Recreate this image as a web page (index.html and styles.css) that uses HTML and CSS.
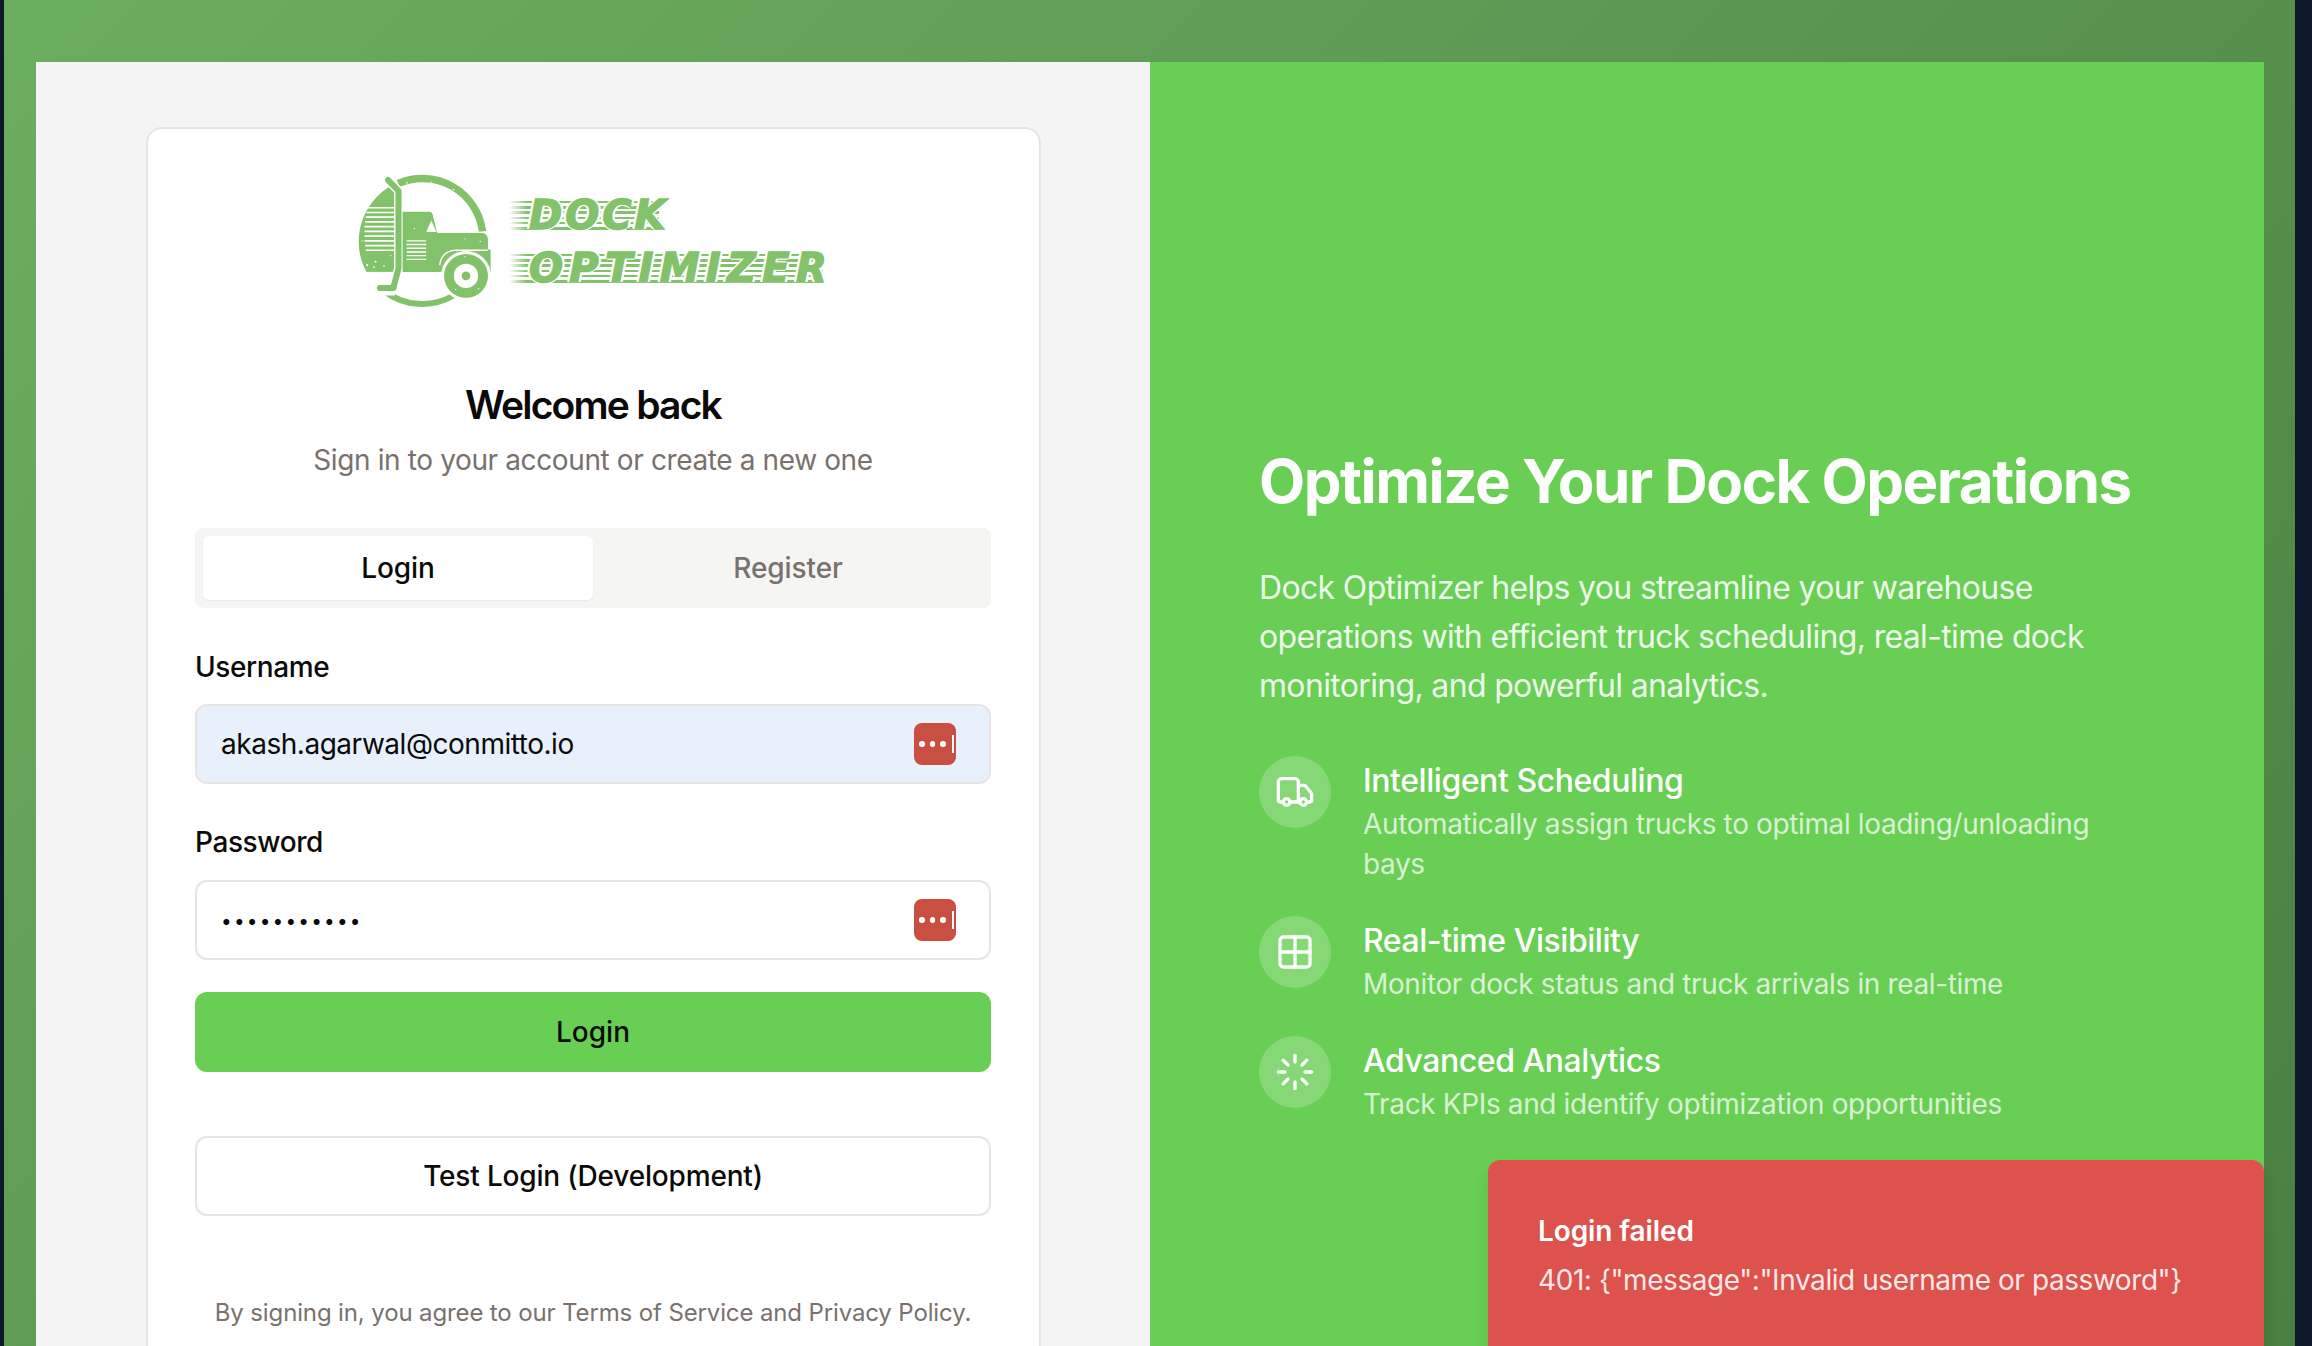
FILE: index.html
```html
<!DOCTYPE html>
<html lang="en">
<head>
<meta charset="utf-8">
<title>Dock Optimizer</title>
<link rel="stylesheet" href="styles.css">
</head>
<body>
<div class="shell">
  <main class="panel">
    <section class="left">
      <div class="card">
        <div class="logo">
          <svg class="logo-mark" viewBox="80 70 400 400" aria-hidden="true">
            <defs>
              <clipPath id="disc"><circle cx="275" cy="270" r="190"/></clipPath>
            </defs>
            <path class="lg-stroke w22" d="M202 98A180 180 0 0 1 452 240"/>
            <path class="lg-stroke w18" d="M160 416A184 184 0 0 0 366 430"/>
            <g clip-path="url(#disc)">
              <rect class="lg" x="80" y="110" width="112" height="250"/>
              <path class="gap-line" d="M110 170H192M108 184H192M106 198H192M104 212H192M102 226H192M102 240H192M102 254H192M102 268H192M104 282H192M106 296H192"/>
            </g>
            <path class="cut" d="M100 361L192 361L192 430L100 430Z"/>
            <path class="halo" d="M172 88L203 120V350L190 398L188 408H148"/>
            <path class="lg-stroke w18" d="M172 88L203 120V350L190 398L188 408H148"/>
            <path class="lg" d="M218 182H294Q302 182 304 190L318 245H452Q466 247 468 262L468 292L476 296V362H340L338 360H215V182Z"/>
            <path class="hole" d="M285 242L300 208L316 242Z"/>
            <path class="gap-line thin" d="M227 268H285M227 279H285M227 290H285M227 301H285M227 312H285M227 323H285"/>
            <path class="cab-arc" d="M325 340Q330 300 370 296H468"/>
            <circle class="wheel-gap" cx="403" cy="372" r="74"/>
            <circle class="lg" cx="403" cy="372" r="65"/>
            <circle class="hole" cx="403" cy="372" r="36"/>
            <circle class="lg" cx="403" cy="372" r="13"/>
            <g class="specks">
              <circle cx="228" cy="96" r="2.5"/><circle cx="300" cy="94" r="2"/><circle cx="366" cy="116" r="2.5"/>
              <circle cx="110" cy="340" r="3"/><circle cx="135" cy="330" r="3"/><circle cx="160" cy="342" r="2.5"/>
              <circle cx="180" cy="312" r="2"/><circle cx="130" cy="346" r="2.5"/><circle cx="250" cy="232" r="2"/>
              <circle cx="400" cy="262" r="2"/><circle cx="445" cy="270" r="2"/><circle cx="400" cy="315" r="2"/>
              <circle cx="372" cy="412" r="2"/><circle cx="440" cy="410" r="2"/><circle cx="95" cy="268" r="2"/>
            </g>
          </svg>
          <div class="wordmark">
            <span class="word word-short">DOCK</span>
            <span class="word word-long">OPTIMIZER</span>
          </div>
        </div>
        <h1 class="welcome">Welcome back</h1>
        <p class="sub">Sign in to your account or create a new one</p>
        <div class="tabs">
          <button class="tab active" type="button">Login</button>
          <button class="tab" type="button">Register</button>
        </div>
        <form class="form">
          <label class="field">
            <span class="label">Username</span>
            <span class="input-wrap">
              <input class="input filled" type="text" value="akash.agarwal@conmitto.io">
              <span class="pm"><i></i><i></i><i></i><b></b></span>
            </span>
          </label>
          <label class="field">
            <span class="label">Password</span>
            <span class="input-wrap">
              <input class="input secret" type="password" value="abcdefghijk">
              <span class="pm"><i></i><i></i><i></i><b></b></span>
            </span>
          </label>
          <button class="btn primary" type="button">Login</button>
          <button class="btn outline" type="button">Test Login (Development)</button>
        </form>
        <p class="terms">By signing in, you agree to our Terms of Service and Privacy Policy.</p>
      </div>
    </section>
    <section class="right">
      <h2 class="headline">Optimize Your Dock Operations</h2>
      <p class="lead">Dock Optimizer helps you streamline your warehouse operations with efficient truck scheduling, real-time dock monitoring, and powerful analytics.</p>
      <ul class="features">
        <li class="feature">
          <span class="f-icon">
            <svg viewBox="0 0 24 24"><path d="M14 18V6a2 2 0 0 0-2-2H4a2 2 0 0 0-2 2v11a1 1 0 0 0 1 1h2"/><path d="M15 18H9"/><path d="M19 18h2a1 1 0 0 0 1-1v-3.65a1 1 0 0 0-.22-.624l-3.48-4.35A1 1 0 0 0 17.52 8H14"/><circle cx="17" cy="18" r="2"/><circle cx="7" cy="18" r="2"/></svg>
          </span>
          <div><h3 class="f-title">Intelligent Scheduling</h3><p class="f-desc">Automatically assign trucks to optimal loading/unloading bays</p></div>
        </li>
        <li class="feature">
          <span class="f-icon">
            <svg viewBox="0 0 24 24"><path d="M12 3v18"/><path d="M3 12h18"/><rect x="3" y="3" width="18" height="18" rx="2"/></svg>
          </span>
          <div><h3 class="f-title">Real-time Visibility</h3><p class="f-desc">Monitor dock status and truck arrivals in real-time</p></div>
        </li>
        <li class="feature">
          <span class="f-icon">
            <svg viewBox="0 0 24 24"><path d="M12 2v4"/><path d="m16.2 7.8 2.9-2.9"/><path d="M18 12h4"/><path d="m16.2 16.2 2.9 2.9"/><path d="M12 18v4"/><path d="m4.9 19.1 2.9-2.9"/><path d="M2 12h4"/><path d="m4.9 4.9 2.9 2.9"/></svg>
          </span>
          <div><h3 class="f-title">Advanced Analytics</h3><p class="f-desc">Track KPIs and identify optimization opportunities</p></div>
        </li>
      </ul>
    </section>
    <aside class="toast">
      <div class="toast-title">Login failed</div>
      <div class="toast-body">401: {"message":"Invalid username or password"}</div>
    </aside>
  </main>
</div>
</body>
</html>
```
FILE: styles.css
```css
* { box-sizing: border-box; }
html, body { margin: 0; height: 100%; }
body {
  background: #0f172a;
  font-family: Inter, "Noto Sans", sans-serif;
  color: #0c0a09;
  overflow: hidden;
}
.shell {
  margin: 0 17px 0 4px;
  height: 1346px;
  padding: 62px 31px 0 32px;
  background: linear-gradient(135deg, #6cae60 0%, #4a7f41 100%);
  overflow: hidden;
}
.panel {
  position: relative;
  display: grid;
  grid-template-columns: 1114px 1114px;
  height: 1284px;
}
.left { background: #f4f4f4; padding: 65px 109px 0 110px; overflow: hidden; }
.card {
  height: 1300px;
  background: #fff;
  border: 2px solid #e7e5e4;
  border-radius: 16px;
  padding: 45px 48px 0 47px;
}
.logo { display: flex; align-items: center; gap: 17px; height: 135px; padding-left: 162px; }
.logo-mark { width: 135px; height: 135px; flex: none; }
.lg { fill: #82c26a; }
.lg-stroke { fill: none; stroke: #82c26a; stroke-linecap: round; stroke-linejoin: round; }
.w22 { stroke-width: 22; stroke-linecap: butt; }
.w18 { stroke-width: 18; }
.halo { fill: none; stroke: #fff; stroke-width: 26; }
.gap-line { fill: none; stroke: #fff; stroke-width: 5; }
.gap-line.thin { stroke-width: 4; }
.cut, .hole { fill: #fff; }
.cab-arc { fill: none; stroke: #fff; stroke-width: 4; }
.wheel-gap { fill: #fff; }
.specks { fill: #fff; }
.wordmark { display: flex; flex-direction: column; gap: 24px; flex: none; }
.word {
  position: relative;
  z-index: 0;
  display: block;
  width: max-content;
  font-family: "DejaVu Sans", sans-serif;
  font-weight: 700;
  font-style: italic;
  font-size: 40px;
  line-height: 29px;
  color: #82c26a;
  padding-left: 20px;
  -webkit-text-stroke: 1.4px #82c26a;
  text-shadow: 3px 0 0 #fff, -3px 0 0 #fff, 0 2px 0 #fff, 0 -2px 0 #fff;
}
.word-short { letter-spacing: 3px; }
.word-long { letter-spacing: 6.3px; }
.word::before {
  content: "";
  position: absolute;
  left: 0; right: 10px; top: 0; bottom: 0;
  z-index: -1;
  background: repeating-linear-gradient(180deg, #82c26a 0 2.5px, transparent 2.5px 5.2px);
  -webkit-mask-image: linear-gradient(90deg, transparent 0, #000 18px);
  mask-image: linear-gradient(90deg, transparent 0, #000 18px);
}
.welcome {
  margin: 72px 0 0;
  text-align: center;
  font-size: 39px;
  line-height: 48px;
  font-weight: 600;
  letter-spacing: -1.8px;
}
.sub {
  margin: 11px 0 0;
  text-align: center;
  font-size: 28px;
  line-height: 40px;
  letter-spacing: -0.38px;
  color: #78716c;
}
.tabs {
  margin-top: 48px;
  display: grid;
  grid-template-columns: 1fr 1fr;
  height: 80px;
  padding: 8px;
  border-radius: 8px;
  background: #f5f5f4;
}
.tab {
  border: 0;
  background: none;
  font: 500 28px Inter, sans-serif;
  letter-spacing: -0.1px;
  color: #78716c;
  border-radius: 6px;
}
.tab.active { background: #fff; color: #0c0a09; box-shadow: 0 1px 2px rgba(0,0,0,.06); }
.form { display: flex; flex-direction: column; }
.field { display: flex; flex-direction: column; margin-top: 39px; }
.field + .field { margin-top: 38px; }
.label { font-size: 28px; line-height: 40px; font-weight: 500; letter-spacing: -0.4px; }
.input-wrap { position: relative; margin-top: 17px; display: block; }
.field + .field .input-wrap { margin-top: 18px; }
.input {
  display: block;
  width: 100%;
  height: 80px;
  padding: 0 24px;
  font: 400 28px Inter, sans-serif;
  letter-spacing: -0.47px;
  color: #0c0a09;
  background: #fff;
  border: 2px solid #e7e5e4;
  border-radius: 12px;
  outline: none;
}
.input.filled { background: #e8f0fc; }
.input.secret { font-size: 19px; letter-spacing: 2.2px; padding-top: 3px; }
.pm {
  position: absolute;
  right: 35px; top: 19px;
  width: 42px; height: 42px;
  border-radius: 8px;
  background: #c94f42;
  display: flex;
  align-items: center;
  gap: 5px;
  padding-left: 5px;
}
.pm i { width: 5.5px; height: 5.5px; border-radius: 50%; background: #fff; }
.pm b { width: 2px; height: 18px; background: #fff; margin-left: 1px; }
.btn {
  height: 80px;
  border-radius: 12px;
  font: 500 28px Inter, sans-serif;
  color: #0c0a09;
}
.primary { margin-top: 32px; background: #68ce54; border: 0; }
.outline { margin-top: 64px; background: #fff; border: 2px solid #e7e5e4; letter-spacing: -0.18px; }
.terms {
  margin: 81px 0 0;
  text-align: center;
  font-size: 24px;
  line-height: 32px;
  letter-spacing: -0.13px;
  color: #78716c;
}
.right { background: #68ce54; padding: 0 110px 0 109px; color: #fff; display: flex; flex-direction: column; }
.headline { margin: 383px 0 0; font-size: 60px; line-height: 72px; font-weight: 700; letter-spacing: -1.5px; white-space: nowrap; }
.lead { margin: 47px 0 0; font-size: 32px; line-height: 48.75px; letter-spacing: -0.66px; color: rgba(255,255,255,.9); }
.features { list-style: none; margin: 46px 0 0; padding: 0; display: flex; flex-direction: column; gap: 32px; }
.feature { display: flex; gap: 32px; align-items: flex-start; }
.f-icon {
  flex: none;
  width: 72px; height: 72px;
  border-radius: 50%;
  background: rgba(255,255,255,.2);
  display: flex; align-items: center; justify-content: center;
}
.f-icon svg { width: 40px; height: 40px; fill: none; stroke: #fff; stroke-width: 2; stroke-linecap: round; stroke-linejoin: round; }
.f-title { margin: 5px 0 0; font-size: 32px; line-height: 40px; font-weight: 500; letter-spacing: -0.45px; }
.f-desc { margin: 3px 0 0; font-size: 28px; line-height: 40px; letter-spacing: -0.37px; color: rgba(255,255,255,.75); }
.toast {
  position: absolute;
  left: 1452px; right: 0; top: 1098px;
  height: 220px;
  padding: 51px 50px;
  border-radius: 12px;
  background: #dd524c;
  box-shadow: 0 10px 15px rgba(0,0,0,.1);
  color: #fff;
}
.toast-title { font-size: 28px; line-height: 40px; font-weight: 600; letter-spacing: -0.1px; }
.toast-body { margin-top: 9px; font-size: 28px; line-height: 40px; letter-spacing: -0.43px; color: rgba(255,255,255,.9); }
```
